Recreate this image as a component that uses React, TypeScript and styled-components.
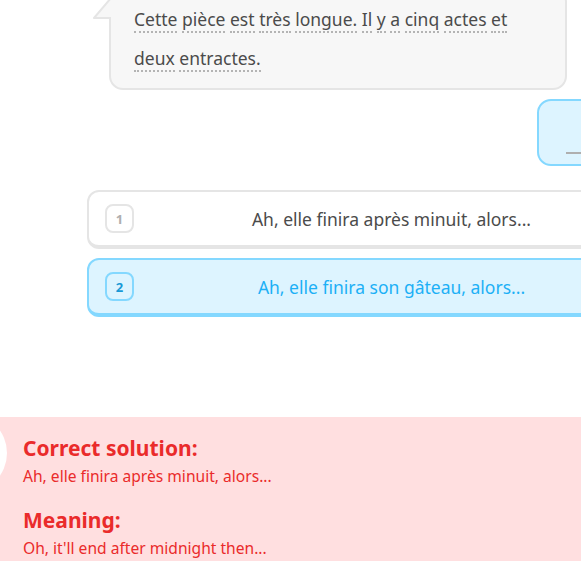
import React from "react";
import styled, { createGlobalStyle } from "styled-components";

const GlobalStyle = createGlobalStyle`
  html, body {
    margin: 0;
    padding: 0;
    background: #ffffff;
    overflow: hidden;
  }
  body {
    font-family: "Noto Sans", Lato, sans-serif;
    font-variant-ligatures: none;
    color: #4b4b4b;
  }
`;

const Page = styled.div`
  width: 581px;
  height: 561px;
  overflow: hidden;
  display: flex;
  flex-direction: column;
`;

const Lesson = styled.div`
  width: 580px;
  margin-left: 87px;
  flex-shrink: 0;
  display: flex;
  flex-direction: column;
`;

const Conversation = styled.div`
  display: flex;
  flex-direction: column;
  gap: 9px;
  margin-top: -12px;
`;

const PromptRow = styled.div`
  display: flex;
  padding-left: 22px;
`;

const PromptBubble = styled.div`
  position: relative;
  width: 458px;
  box-sizing: border-box;
  background: #f7f7f7;
  border: 2px solid #e5e5e5;
  border-radius: 14px;
  padding: 10px 16px 10px 23px;
  font-size: 17.5px;
  line-height: 39px;
  color: #4b4b4b;
`;

const Tail = styled.svg`
  position: absolute;
  left: -18px;
  top: 8px;
  width: 22px;
  height: 22px;
  overflow: visible;
`;

const Line = styled.div`
  white-space: nowrap;
`;

const Token = styled.span`
  border-bottom: 2px dotted #b4b4b4;
`;

const AnswerRow = styled.div`
  display: flex;
  justify-content: flex-end;
`;

const AnswerBubble = styled.div`
  width: 130px;
  height: 67px;
  box-sizing: border-box;
  border: 2px solid #84d8ff;
  background: #ddf4ff;
  border-radius: 14px;
  padding: 0 27px 10px;
  display: flex;
  align-items: flex-end;
`;

const Blank = styled.div`
  flex: 1;
  height: 2px;
  background: #afafaf;
`;

const Choices = styled.div`
  margin-top: 24px;
  display: flex;
  flex-direction: column;
  gap: 9px;
`;

const Card = styled.div<{ $selected?: boolean }>`
  height: 59px;
  box-sizing: border-box;
  display: flex;
  align-items: center;
  padding: 0 16px;
  border: 2px solid ${(p) => (p.$selected ? "#84d8ff" : "#e5e5e5")};
  border-bottom-width: 4px;
  border-radius: 12px;
  background: ${(p) => (p.$selected ? "#ddf4ff" : "#ffffff")};
`;

const NumBox = styled.div<{ $selected?: boolean }>`
  width: 29px;
  height: 29px;
  box-sizing: border-box;
  flex-shrink: 0;
  border: 2px solid ${(p) => (p.$selected ? "#84d8ff" : "#e5e5e5")};
  border-radius: 8px;
  display: flex;
  align-items: center;
  justify-content: center;
  font-size: 13px;
  font-weight: 700;
  color: ${(p) => (p.$selected ? "#1899d6" : "#afafaf")};
`;

const ChoiceText = styled.div<{ $selected?: boolean }>`
  flex: 1;
  text-align: center;
  font-size: 17.5px;
  color: ${(p) => (p.$selected ? "#1cb0f6" : "#4b4b4b")};
`;

const Feedback = styled.div`
  margin-top: 100px;
  flex: 1;
  background: #ffdfe0;
  padding-top: 18px;
`;

const FeedbackInner = styled.div`
  display: flex;
  gap: 16px;
  margin-left: -73px;
`;

const IconCircle = styled.div`
  width: 80px;
  height: 80px;
  border-radius: 50%;
  background: #ffffff;
  flex-shrink: 0;
  margin-top: -22px;
`;

const FeedbackTexts = styled.div`
  display: flex;
  flex-direction: column;
  color: #ea2b2b;
`;

const FeedbackTitle = styled.div<{ $gap?: number }>`
  font-size: 21px;
  font-weight: 700;
  line-height: 26px;
  margin-top: ${(p) => p.$gap ?? 0}px;
`;

const FeedbackBody = styled.div`
  font-size: 15.6px;
  line-height: 22px;
  margin-top: 4px;
`;

const line1 = ["Cette", "pièce", "est", "très", "longue.", "Il", "y", "a", "cinq", "actes", "et"];
const line2 = ["deux", "entractes."];

const renderTokens = (words: string[]) =>
  words.map((w, i) => (
    <React.Fragment key={i}>
      <Token>{w}</Token>
      {i < words.length - 1 ? " " : ""}
    </React.Fragment>
  ));

const choices = [
  { n: 1, text: "Ah, elle finira après minuit, alors...", selected: false },
  { n: 2, text: "Ah, elle finira son gâteau, alors...", selected: true },
];

export default function App() {
  return (
    <>
      <GlobalStyle />
      <Page>
        <Lesson>
          <Conversation>
            <PromptRow>
              <PromptBubble>
                <Tail viewBox="0 0 22 22">
                  <polygon points="17,1 1,20 21,20 21,1" fill="#f7f7f7" />
                  <polyline
                    points="18,0 1,20 18,20"
                    fill="none"
                    stroke="#e5e5e5"
                    strokeWidth="2"
                    strokeLinejoin="round"
                  />
                </Tail>
                <Line>{renderTokens(line1)}</Line>
                <Line>{renderTokens(line2)}</Line>
              </PromptBubble>
            </PromptRow>
            <AnswerRow>
              <AnswerBubble>
                <Blank />
              </AnswerBubble>
            </AnswerRow>
          </Conversation>
          <Choices>
            {choices.map((c) => (
              <Card key={c.n} $selected={c.selected}>
                <NumBox $selected={c.selected}>{c.n}</NumBox>
                <ChoiceText $selected={c.selected}>{c.text}</ChoiceText>
              </Card>
            ))}
          </Choices>
        </Lesson>
        <Feedback>
          <FeedbackInner>
            <IconCircle />
            <FeedbackTexts>
              <FeedbackTitle>Correct solution:</FeedbackTitle>
              <FeedbackBody>Ah, elle finira après minuit, alors...</FeedbackBody>
              <FeedbackTitle $gap={20}>Meaning:</FeedbackTitle>
              <FeedbackBody>Oh, it'll end after midnight then...</FeedbackBody>
            </FeedbackTexts>
          </FeedbackInner>
        </Feedback>
      </Page>
    </>
  );
}
